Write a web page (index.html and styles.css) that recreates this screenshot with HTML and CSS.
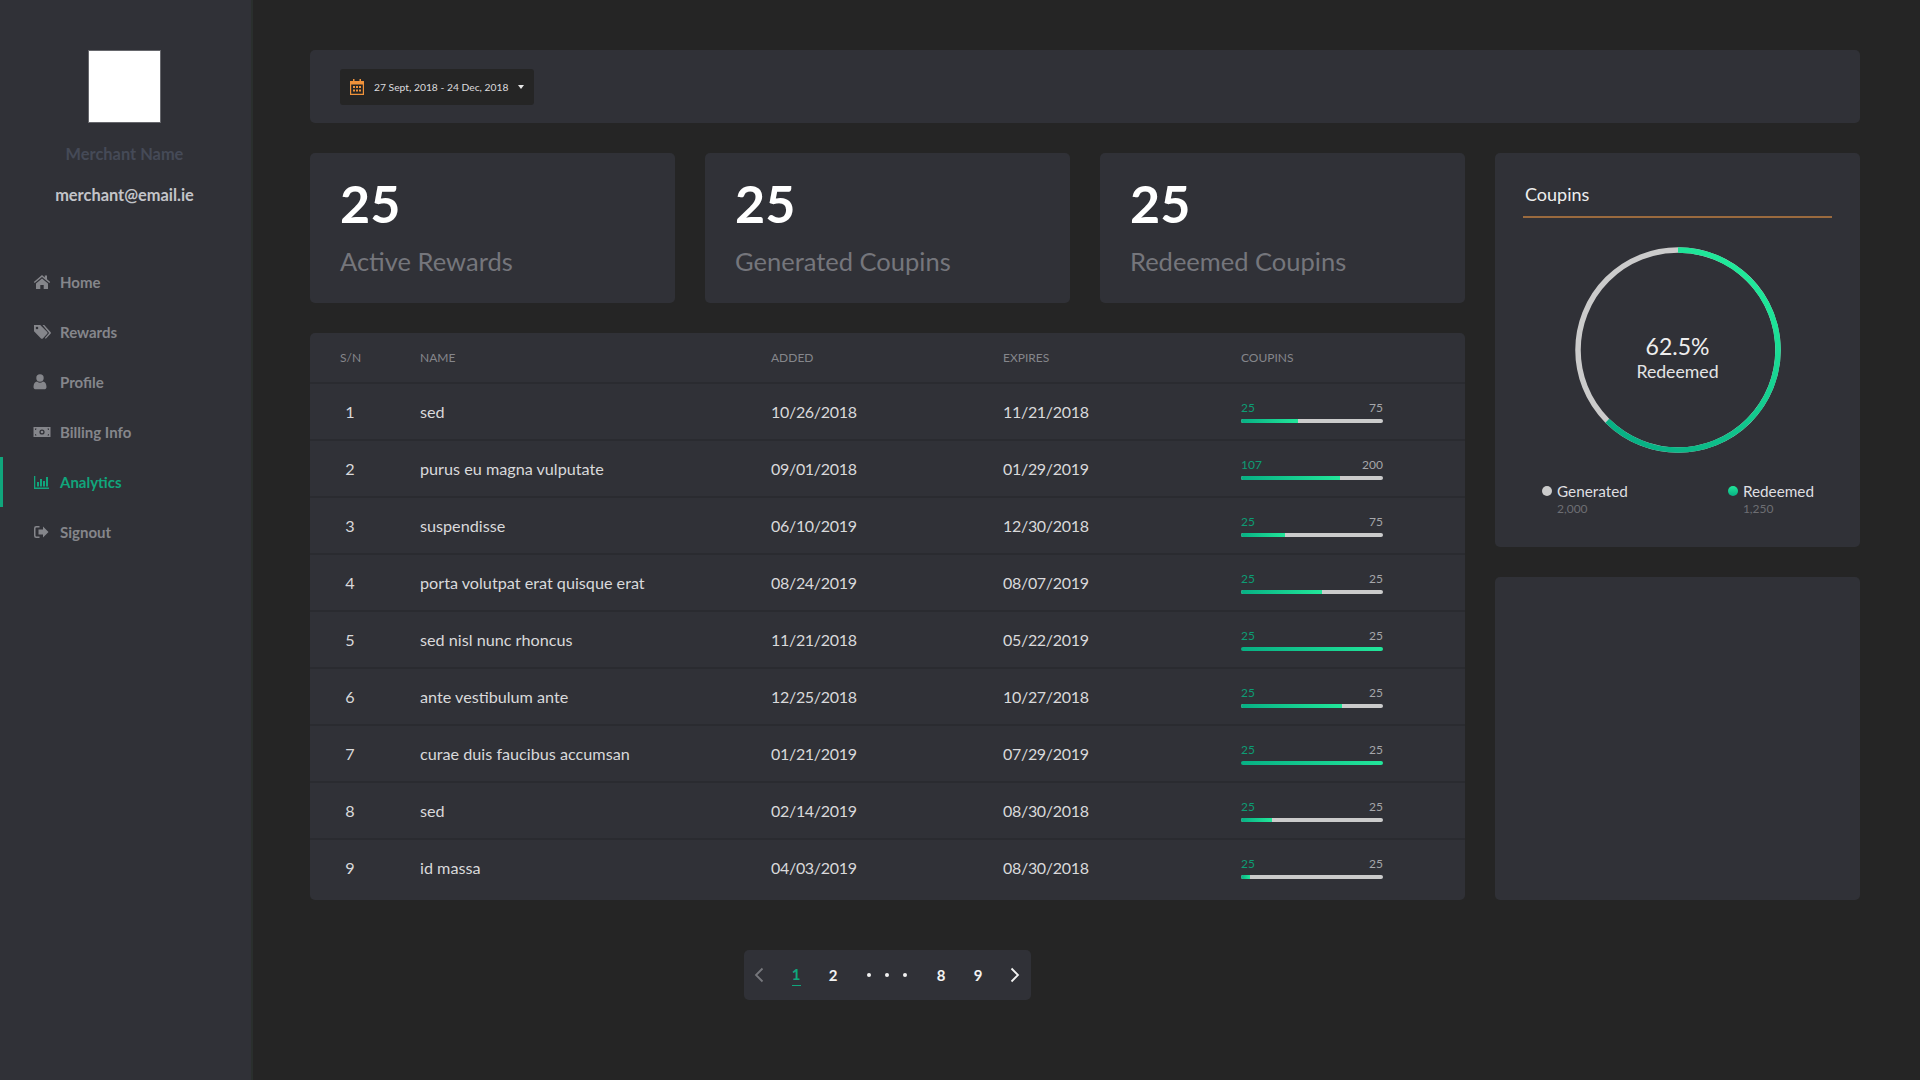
FILE: index.html
```html
<!DOCTYPE html>
<html lang="en">
<head>
    <meta charset="UTF-8">
    <meta name="viewport" content="width=device-width, initial-scale=1.0">
    <title>Merchant Analytics</title>
    <link rel="stylesheet" href="styles.css">
</head>
<body>
    <div class="app">
        <aside class="sidebar">
            <div class="logo"></div>
            <div class="merchant-name">Merchant Name</div>
            <div class="merchant-email">merchant@email.ie</div>
            <nav class="nav">
                <a class="nav-item">
                    <svg class="nav-icon" viewBox="0 0 18 16"><path d="M9 1 .8 8l.9 1.100L9 3l7.300 6.100.9-1.100-3.200-2.700V1.500h-2.200v2z"/><path d="M3 9.600 9 4.600l6 5V15h-4.300v-4H7.300v4H3z"/></svg>
                    Home
                </a>
                <a class="nav-item">
                    <svg class="nav-icon" viewBox="0 0 18 16"><path fill-rule="evenodd" d="M1 1h6.200l7 7a1.300 1.300 0 0 1 0 1.800L9.800 14.400a1.300 1.300 0 0 1-1.800 0L1 7.200zm3 1.700a1.300 1.300 0 1 0 0 2.600 1.300 1.300 0 0 0 0-2.600z"/><path d="M9.500 1h1.700l6.300 7a1.300 1.300 0 0 1 0 1.800l-4.700 5-.9-.9 4.200-5z"/></svg>
                    Rewards
                </a>
                <a class="nav-item">
                    <svg class="nav-icon" viewBox="0 0 18 16"><circle cx="7" cy="4" r="3.700"/><path d="M.5 13c0-3.500 1.500-5.400 3.600-5.600a4.400 4.400 0 0 0 5.800 0C12 7.600 13.500 9.500 13.500 13c0 1.500-1 2.300-2.300 2.300H2.800C1.500 15.300.5 14.500.5 13z"/></svg>
                    Profile
                </a>
                <a class="nav-item">
                    <svg class="nav-icon" viewBox="0 0 18 16"><path fill-rule="evenodd" d="M.5 3h17v10H.5zM9 5.400a2.600 2.600 0 1 0 0 5.200 2.600 2.600 0 0 0 0-5.200zM2 4.500v1.500a1.500 1.500 0 0 0 1.500-1.500zm12.500 0A1.500 1.500 0 0 0 16 6V4.500zM2 10v1.500h1.500A1.500 1.500 0 0 0 2 10zm14 0a1.500 1.500 0 0 0-1.500 1.500H16z"/><circle cx="9" cy="8" r="1.300"/></svg>
                    Billing Info
                </a>
                <a class="nav-item active">
                    <svg class="nav-icon" viewBox="0 0 18 16"><path d="M1 2h1.300v11.400H16V15H1z"/><rect x="4" y="8" width="2" height="4.500"/><rect x="7" y="5" width="2" height="7.500"/><rect x="10" y="7" width="2" height="5.500"/><rect x="13" y="3" width="2" height="9.500"/></svg>
                    Analytics
                </a>
                <a class="nav-item">
                    <svg class="nav-icon" viewBox="0 0 18 16"><path d="M6.500 2v1.500H3.500a1 1 0 0 0-1 1v7a1 1 0 0 0 1 1h3V14H3.200A2.200 2.200 0 0 1 1 11.800V4.200A2.200 2.200 0 0 1 3.200 2z"/><path d="M10 2.500 15.500 8 10 13.500V10.500H5.500v-5H10z"/></svg>
                    Signout
                </a>
            </nav>
        </aside>

        <main class="main">
            <div class="panel filter-bar">
                <div class="date-picker">
                    <svg class="date-icon" viewBox="0 0 14 16"><path d="M3 0h1.500v2h5V0H11v2h3v14H0V2h3zM1.200 5.500v9.300h11.600V5.500z" fill-rule="evenodd"/><rect x="3" y="7" width="2" height="2"/><rect x="6" y="7" width="2" height="2"/><rect x="9" y="7" width="2" height="2"/><rect x="3" y="10.500" width="2" height="2"/><rect x="6" y="10.500" width="2" height="2"/><rect x="9" y="10.500" width="2" height="2"/></svg>
                    <span class="date-text">27 Sept, 2018 - 24 Dec, 2018</span>
                    <span class="caret"></span>
                </div>
            </div>

            <div class="content">
                <div class="left-col">
                    <div class="stats">
                        <div class="panel stat-card">
                            <div class="stat-number">25</div>
                            <div class="stat-label">Active Rewards</div>
                        </div>
                        <div class="panel stat-card">
                            <div class="stat-number">25</div>
                            <div class="stat-label">Generated Coupins</div>
                        </div>
                        <div class="panel stat-card">
                            <div class="stat-number">25</div>
                            <div class="stat-label">Redeemed Coupins</div>
                        </div>
                    </div>

                    <div class="panel rewards-table">
                        <div class="row head">
                            <div>S/N</div><div>Name</div><div>Added</div><div>Expires</div><div>Coupins</div>
                        </div>
                        <div class="row">
                            <div class="sn">1</div><div>sed</div><div class="date">10/26/2018</div><div class="date">11/21/2018</div>
                            <div class="coupins"><div class="bar-labels"><span class="used">25</span><span>75</span></div><div class="bar"><div class="bar-fill" style="width: 40%"></div></div></div>
                        </div>
                        <div class="row">
                            <div class="sn">2</div><div>purus eu magna vulputate</div><div class="date">09/01/2018</div><div class="date">01/29/2019</div>
                            <div class="coupins"><div class="bar-labels"><span class="used">107</span><span>200</span></div><div class="bar"><div class="bar-fill" style="width: 70%"></div></div></div>
                        </div>
                        <div class="row">
                            <div class="sn">3</div><div>suspendisse</div><div class="date">06/10/2019</div><div class="date">12/30/2018</div>
                            <div class="coupins"><div class="bar-labels"><span class="used">25</span><span>75</span></div><div class="bar"><div class="bar-fill" style="width: 31%"></div></div></div>
                        </div>
                        <div class="row">
                            <div class="sn">4</div><div>porta volutpat erat quisque erat</div><div class="date">08/24/2019</div><div class="date">08/07/2019</div>
                            <div class="coupins"><div class="bar-labels"><span class="used">25</span><span>25</span></div><div class="bar"><div class="bar-fill" style="width: 57%"></div></div></div>
                        </div>
                        <div class="row">
                            <div class="sn">5</div><div>sed nisl nunc rhoncus</div><div class="date">11/21/2018</div><div class="date">05/22/2019</div>
                            <div class="coupins"><div class="bar-labels"><span class="used">25</span><span>25</span></div><div class="bar"><div class="bar-fill" style="width: 100%"></div></div></div>
                        </div>
                        <div class="row">
                            <div class="sn">6</div><div>ante vestibulum ante</div><div class="date">12/25/2018</div><div class="date">10/27/2018</div>
                            <div class="coupins"><div class="bar-labels"><span class="used">25</span><span>25</span></div><div class="bar"><div class="bar-fill" style="width: 71%"></div></div></div>
                        </div>
                        <div class="row">
                            <div class="sn">7</div><div>curae duis faucibus accumsan</div><div class="date">01/21/2019</div><div class="date">07/29/2019</div>
                            <div class="coupins"><div class="bar-labels"><span class="used">25</span><span>25</span></div><div class="bar"><div class="bar-fill" style="width: 100%"></div></div></div>
                        </div>
                        <div class="row">
                            <div class="sn">8</div><div>sed</div><div class="date">02/14/2019</div><div class="date">08/30/2018</div>
                            <div class="coupins"><div class="bar-labels"><span class="used">25</span><span>25</span></div><div class="bar"><div class="bar-fill" style="width: 22%"></div></div></div>
                        </div>
                        <div class="row">
                            <div class="sn">9</div><div>id massa</div><div class="date">04/03/2019</div><div class="date">08/30/2018</div>
                            <div class="coupins"><div class="bar-labels"><span class="used">25</span><span>25</span></div><div class="bar"><div class="bar-fill" style="width: 6%"></div></div></div>
                        </div>
                    </div>

                    <div class="panel pagination">
                        <span class="page-item muted"><svg class="chevron" viewBox="0 0 10 16"><path d="M8.500 1.500 2 8l6.500 6.500"/></svg></span>
                        <span class="page-item current">1</span>
                        <span class="page-item">2</span>
                        <span class="page-dots"><i></i><i></i><i></i></span>
                        <span class="page-item">8</span>
                        <span class="page-item">9</span>
                        <span class="page-item"><svg class="chevron" viewBox="0 0 10 16"><path d="M1.500 1.500 8 8l-6.500 6.500"/></svg></span>
                    </div>
                </div>

                <div class="right-col">
                    <div class="panel coupins-card">
                        <h3 class="card-title">Coupins</h3>
                        <div class="donut">
                            <svg viewBox="0 0 206 206" width="206" height="206">
                                <defs>
                                    <linearGradient id="donutGrad" x1="0.8" y1="0" x2="0.2" y2="1">
                                        <stop offset="0" stop-color="#22ee9c"/>
                                        <stop offset="1" stop-color="#07b084"/>
                                    </linearGradient>
                                </defs>
                                <circle cx="103" cy="103" r="100" fill="none" stroke="#cbcbcb" stroke-width="5.500"/>
                                <path d="M103 3A100 100 0 1 1 32.300 173.700" fill="none" stroke="url(#donutGrad)" stroke-width="5.500"/>
                            </svg>
                            <div class="donut-text">
                                <div class="donut-value">62.5%</div>
                                <div class="donut-label">Redeemed</div>
                            </div>
                        </div>
                        <div class="legend">
                            <div class="legend-item">
                                <div class="legend-name"><span class="dot grey"></span>Generated</div>
                                <div class="legend-count">2,000</div>
                            </div>
                            <div class="legend-item">
                                <div class="legend-name"><span class="dot green"></span>Redeemed</div>
                                <div class="legend-count">1,250</div>
                            </div>
                        </div>
                    </div>
                    <div class="panel empty-card"></div>
                </div>
            </div>
        </main>
    </div>
</body>
</html>
```

FILE: styles.css
```css
* {
    box-sizing: border-box;
}
body {
    margin: 0;
    background-color: #252525;
    color: #d9d9db;
    font-family: Lato, "Open Sans", sans-serif;
}
.app {
    display: flex;
    min-height: 100vh;
}

/* sidebar */
.sidebar {
    width: 253px;
    flex-shrink: 0;
    padding: 50px 2px 0 0;
    background-color: #303137;
    border-right: 2px solid #2a2f2d;
    text-align: center;
}
.logo {
    width: 73px;
    height: 73px;
    margin: 0 auto;
    background-color: #fff;
    border: 1px solid #66676c;
}
.merchant-name {
    margin-top: 21px;
    font-size: 16.400px;
    font-weight: 700;
    line-height: 20px;
    color: #454a57;
}
.merchant-email {
    margin-top: 21px;
    font-size: 16.400px;
    font-weight: 700;
    line-height: 20px;
    color: #c3c4c9;
}
.nav {
    margin-top: 52px;
}
.nav-item {
    display: flex;
    align-items: center;
    height: 50px;
    padding-left: 33px;
    font-size: 15px;
    font-weight: 700;
    color: #85868b;
}
.nav-item.active {
    color: #10a67c;
    box-shadow: inset 3px 0 0 #10a67c;
}
.nav-icon {
    width: 18px;
    height: 16px;
    margin-right: 9px;
    fill: currentColor;
}

/* main area */
.main {
    flex: 1;
    padding: 50px 60px 0 57px;
}
.panel {
    background-color: #303137;
    border-radius: 5px;
}
.filter-bar {
    display: flex;
    align-items: center;
    height: 73px;
    padding-left: 30px;
    margin-bottom: 30px;
}
.date-picker {
    display: flex;
    align-items: center;
    width: 194px;
    height: 36px;
    padding-left: 10px;
    background-color: #252525;
    border-radius: 3px;
}
.date-icon {
    width: 14px;
    height: 16px;
    margin-right: 10px;
    fill: #f0923a;
}
.date-text {
    font-size: 10.300px;
    color: #dcdcde;
}
.caret {
    width: 0;
    height: 0;
    margin-left: 10px;
    border-left: 3px solid transparent;
    border-right: 3px solid transparent;
    border-top: 4px solid #e8e8e8;
}
.content {
    display: grid;
    grid-template-columns: 1155px 365px;
    gap: 30px;
}
.stats {
    display: grid;
    grid-template-columns: repeat(3, 365px);
    gap: 30px;
}
.stat-card {
    height: 150px;
    padding: 23px 30px 0;
}
.stat-number {
    font-size: 52px;
    font-weight: 700;
    line-height: 54px;
    color: #fff;
}
.stat-label {
    margin-top: 14px;
    font-size: 25.500px;
    line-height: 34px;
    color: #75767c;
}

/* table */
.rewards-table {
    margin-top: 30px;
    height: 567px;
}
.row {
    display: grid;
    grid-template-columns: 80px 351px 232px 238px 1fr;
    align-items: center;
    height: 57px;
    padding-left: 30px;
    font-size: 16.200px;
    border-top: 2px solid #2a2b30;
}
.row.head {
    height: 49px;
    border-top: none;
    font-size: 12px;
    text-transform: uppercase;
    color: #85868b;
}
.date {
    font-size: 16px;
    letter-spacing: -0.3px;
}
.sn {
    width: 20px;
    text-align: center;
}
.coupins {
    width: 142px;
    font-size: 12px;
    color: #a5a6aa;
}
.bar-labels {
    display: flex;
    justify-content: space-between;
    line-height: 14px;
    margin-bottom: 4px;
}
.used {
    color: #0d9c74;
}
.bar {
    height: 4px;
    background-color: #cbcbcb;
    border-radius: 2px;
    overflow: hidden;
}
.bar-fill {
    height: 100%;
    background: linear-gradient(to right, #07b084, #22e69a);
}

/* pagination */
.pagination {
    display: flex;
    align-items: center;
    gap: 7px;
    width: 287px;
    height: 50px;
    margin: 50px auto 0;
    font-size: 15px;
    font-weight: 700;
    color: #f2f2f2;
}
.page-item {
    width: 30px;
    text-align: center;
    line-height: 20px;
}
.page-item.muted {
    color: #76777c;
}
.page-item.current {
    color: #10a67c;
}
.page-item.current::after {
    content: "";
    display: block;
    width: 9px;
    height: 1px;
    margin: 1px auto 0;
    background-color: #10a67c;
}
.chevron {
    display: block;
    width: 10px;
    height: 16px;
    margin: 0 auto;
    fill: none;
    stroke: currentColor;
    stroke-width: 1.800;
}
.page-dots {
    display: flex;
    justify-content: center;
    gap: 14px;
    width: 64px;
}
.page-dots i {
    width: 4px;
    height: 4px;
    border-radius: 50%;
    background-color: #f2f2f2;
}

/* right column */
.right-col {
    display: flex;
    flex-direction: column;
    gap: 30px;
}
.coupins-card {
    height: 394px;
    padding: 30px 28px 0;
}
.card-title {
    margin: 0;
    padding: 0 2px 10px;
    font-size: 18px;
    font-weight: 400;
    line-height: 23px;
    color: #eee;
    border-bottom: 2px solid #9a6a3e;
}
.donut {
    position: relative;
    width: 206px;
    height: 206px;
    margin: 29px auto 0;
}
.donut svg {
    display: block;
}
.donut-text {
    position: absolute;
    top: 85px;
    left: 0;
    right: 0;
    text-align: center;
}
.donut-value {
    font-size: 23px;
    line-height: 28px;
    color: #eee;
}
.donut-label {
    font-size: 17.700px;
    line-height: 24px;
    color: #e4e4e6;
}
.legend {
    display: flex;
    justify-content: space-between;
    margin-top: 28px;
    padding: 0 18px 0 19px;
}
.legend-name {
    display: flex;
    align-items: center;
    font-size: 15.300px;
    line-height: 20px;
    color: #dfdfe1;
}
.legend-count {
    margin-top: 1px;
    padding-left: 15px;
    font-size: 12px;
    line-height: 14px;
    color: #6d6e73;
}
.dot {
    width: 10px;
    height: 10px;
    margin-right: 5px;
    border-radius: 50%;
}
.dot.grey {
    background-color: #cbcbcb;
}
.dot.green {
    background: linear-gradient(#22e69a, #07b084);
}
.empty-card {
    height: 323px;
}
```
